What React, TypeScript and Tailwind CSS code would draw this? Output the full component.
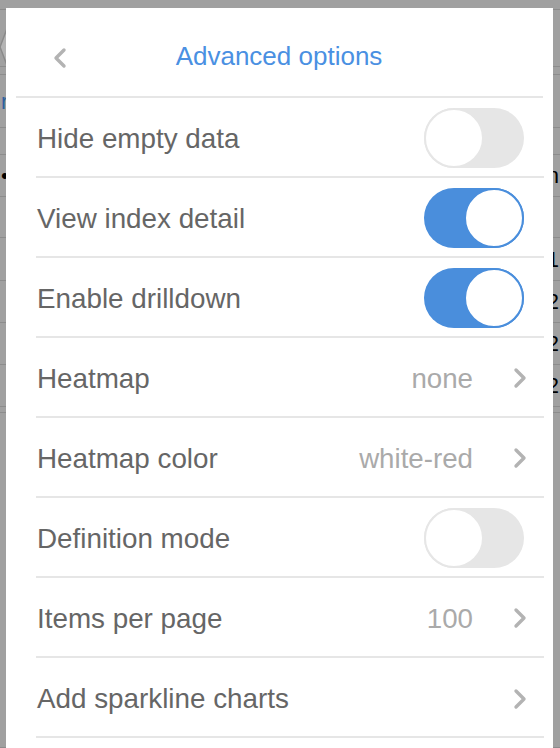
const font = { fontFamily: '"Liberation Sans", Arial, sans-serif' };

function Chevron({ left = false }: { left?: boolean }) {
  return (
    <svg width="14" height="22" viewBox="0 0 14 22" fill="none">
      <polyline
        points={left ? "11,3 3,11 11,19" : "3,3 11,11 3,19"}
        stroke="#b3b3b3"
        strokeWidth="3.4"
        strokeLinecap="round"
        strokeLinejoin="round"
      />
    </svg>
  );
}

function Toggle({ on }: { on: boolean }) {
  return on ? (
    <div className="w-[100px] h-[60px] rounded-full bg-[#4a8edc] flex justify-end items-center">
      <div className="w-[60px] h-[60px] rounded-full bg-white border-2 border-[#4a8edc]" />
    </div>
  ) : (
    <div className="w-[100px] h-[60px] rounded-full bg-[#e6e6e6] flex justify-start items-center">
      <div className="w-[60px] h-[60px] rounded-full bg-white border-2 border-[#e6e6e6]" />
    </div>
  );
}

type Row =
  | { label: string; kind: "toggle"; on: boolean }
  | { label: string; kind: "link"; value?: string };

const rows: Row[] = [
  { label: "Hide empty data", kind: "toggle", on: false },
  { label: "View index detail", kind: "toggle", on: true },
  { label: "Enable drilldown", kind: "toggle", on: true },
  { label: "Heatmap", kind: "link", value: "none" },
  { label: "Heatmap color", kind: "link", value: "white-red" },
  { label: "Definition mode", kind: "toggle", on: false },
  { label: "Items per page", kind: "link", value: "100" },
  { label: "Add sparkline charts", kind: "link" },
];

// table lines peeking out behind the popover
const bgRows = [10, 57, 8, 53, 27, 42, 41, 43, 42, 42, 42, 6, 335];

export default function App() {
  return (
    <div className="relative w-[560px] h-[748px] overflow-hidden bg-[#a0a0a0]" style={font}>
      <div className="flex flex-col">
        {bgRows.map((h, i) => (
          <div
            key={i}
            className="border-b border-[#8c8c8c] flex justify-between items-center px-[1px] text-[22px] text-black"
            style={{ height: h }}
          >
            <span>{i === 3 ? <span className="text-[#2d5f9e]">r</span> : i === 5 ? "•" : ""}</span>
            <span className="pl-[2px]">{i === 5 ? "n" : i === 7 ? "1" : i === 8 || i === 9 || i === 10 ? "2" : ""}</span>
          </div>
        ))}
      </div>

      <svg className="absolute left-0 top-[26px]" width="8" height="44" viewBox="0 0 8 44">
        <polygon points="8,0 0,21 8,42" fill="#b4b4b4" stroke="#8a8a8a" strokeWidth="1.5" />
      </svg>

      <div className="absolute left-[6px] top-[8px] w-[547px] h-[760px] bg-white flex flex-col">
        <div className="h-[90px] mx-[10px] pt-[10px] border-b-2 border-[#e6e6e6] flex items-center">
          <div className="pl-[37px] pt-[1px]">
            <Chevron left />
          </div>
          <div className="flex-1 text-center text-[26px] text-[#4a90e2] pr-[52px] pb-[2px]">
            Advanced options
          </div>
        </div>
        {rows.map((r) => (
          <div
            key={r.label}
            className="h-[80px] ml-[30px] mr-[9px] pt-[1px] border-b-2 border-[#e6e6e6] flex items-center justify-between"
          >
            <span className="pl-[1px] pt-[3px] text-[27.8px] text-[#666666]">{r.label}</span>
            {r.kind === "toggle" ? (
              <div className="mr-[20px]">
                <Toggle on={r.on} />
              </div>
            ) : (
              <div className="flex items-center mr-[17px] pt-[2px]">
                {r.value && <span className="text-[27.7px] text-[#aaaaaa] mr-[40px]">{r.value}</span>}
                <Chevron />
              </div>
            )}
          </div>
        ))}
      </div>
    </div>
  );
}
